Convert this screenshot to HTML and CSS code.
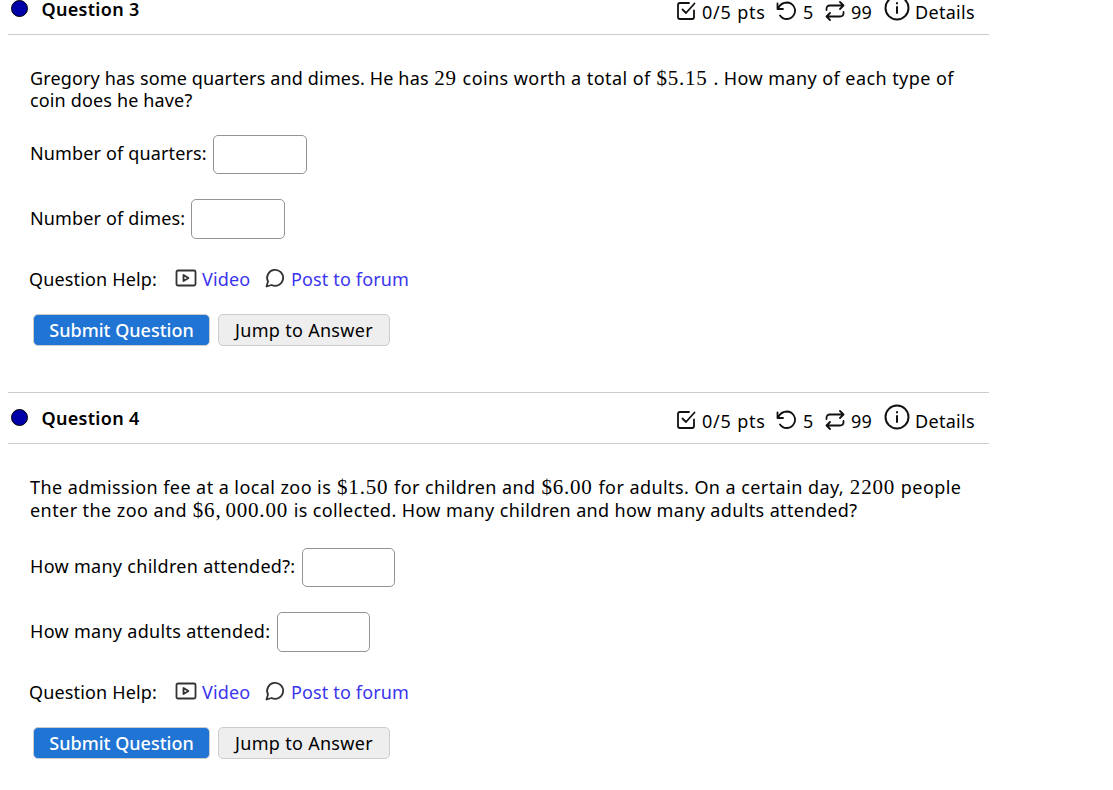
FILE: index.html
```
<!DOCTYPE html>
<html lang="en">
<head>
	<meta charset="UTF-8">
	<title>Questions</title>
	<link rel="stylesheet" href="styles.css">
</head>
<body>
	<svg class="sprite" width="0" height="0">
		<symbol id="check" viewBox="0 0 20 20"><path d="M13 2H4Q2 2 2 4V16Q2 18 4 18H16Q18 18 18 16V9.500M6.500 8.500L10 12L18.500 2.500"/></symbol>
		<symbol id="undo" viewBox="0 0 20 20"><path d="M1.500 2.500V8H7M2 7.500C4 3.500 7 1.500 11 1.500A8.250 8.250 0 1 1 4 14.500"/></symbol>
		<symbol id="repeat" viewBox="0 0 20 20"><path d="M15 1L18.500 4.500L15 8M18.500 4.500H5Q1.500 4.500 1.500 8V9M5 12L1.500 15.500L5 19M1.500 15.500H15Q18.500 15.500 18.500 12V11"/></symbol>
		<symbol id="info" viewBox="0 0 26 26"><circle cx="13" cy="13" r="11.500"/><path d="M13 12V18M13 8V8.500"/></symbol>
		<symbol id="video" viewBox="0 0 22 18"><rect x="1.500" y="1.500" width="19" height="15" rx="1.500"/><path d="M8.500 6V12L13.500 9Z"/></symbol>
		<symbol id="forum" viewBox="0 0 20 20"><path d="M1.500 18.500L3 13.500A8 8 0 1 1 6.500 17Z"/></symbol>
	</svg>
	<div class="wrap">
		<div class="question">
			<div class="head">
				<span class="dot"></span>
				<h2>Question 3</h2>
				<div class="meta">
					<svg class="icon check"><use href="#check"/></svg><span class="pts">0/5 pts</span>
					<svg class="icon undo"><use href="#undo"/></svg><span class="tries">5</span>
					<svg class="icon repeat"><use href="#repeat"/></svg><span class="versions">99</span>
					<svg class="icon info"><use href="#info"/></svg><span class="details">Details</span>
				</div>
			</div>
			<div class="content">
				<p class="text"><span class="tight">Gregory has some quarters and dimes. He has </span><span class="math">29</span> coins worth a total of <span class="math">$5.15</span> . How many of each type of<br><span class="tight">coin does he have?</span></p>
				<div class="row tight"><label for="q3a">Number of quarters:</label><input type="text" id="q3a"></div>
				<div class="row tall tight"><label for="q3b">Number of dimes:</label><input type="text" id="q3b"></div>
				<div class="help tight">
					<span class="help_t">Question Help:</span>
					<svg class="icon video"><use href="#video"/></svg><a href="#" class="video_a">Video</a>
					<svg class="icon forum"><use href="#forum"/></svg><a href="#">Post to forum</a>
				</div>
				<div class="btns">
					<button class="btn primary">Submit Question</button>
					<button class="btn">Jump to Answer</button>
				</div>
			</div>
		</div>
		<div class="question second">
			<div class="head">
				<span class="dot"></span>
				<h2>Question 4</h2>
				<div class="meta">
					<svg class="icon check"><use href="#check"/></svg><span class="pts">0/5 pts</span>
					<svg class="icon undo"><use href="#undo"/></svg><span class="tries">5</span>
					<svg class="icon repeat"><use href="#repeat"/></svg><span class="versions">99</span>
					<svg class="icon info"><use href="#info"/></svg><span class="details">Details</span>
				</div>
			</div>
			<div class="content">
				<p class="text">The admission fee at a local zoo is <span class="math">$1.50</span> for children and <span class="math">$6.00</span> for adults. On a certain day, <span class="math">2200</span> people<br>enter the zoo and <span class="math">$6,<span class="thin"></span>000.00</span><span class="snug"> is collected. How many children and how many adults attended?</span></p>
				<div class="row"><label for="q4a">How many children attended?:</label><input type="text" id="q4a"></div>
				<div class="row tall"><label for="q4b">How many adults attended:</label><input type="text" id="q4b"></div>
				<div class="help tight">
					<span class="help_t">Question Help:</span>
					<svg class="icon video"><use href="#video"/></svg><a href="#" class="video_a">Video</a>
					<svg class="icon forum"><use href="#forum"/></svg><a href="#">Post to forum</a>
				</div>
				<div class="btns">
					<button class="btn primary">Submit Question</button>
					<button class="btn">Jump to Answer</button>
				</div>
			</div>
		</div>
	</div>
</body>
</html>
```
FILE: styles.css
```
html {
    overflow: hidden;
}

body,
p,
h2 {
    margin: 0;
    padding: 0;
}

body {
    background: #fff;
    color: #000;
    font: 18px/22px "Trebuchet MS", "Noto Sans", sans-serif;
    letter-spacing: 0.3px;
}

a {
    color: #3b35ee;
    text-decoration: none;
}

.sprite {
    display: block;
}

.wrap {
    width: 981px;
    margin: -17px 0 0 8px;
}

.head {
    display: flex;
    align-items: center;
    height: 52px;
    box-sizing: border-box;
    border-top: 1px solid #ccc;
    border-bottom: 1px solid #ccc;
}

.dot {
    width: 17px;
    height: 17px;
    margin: 0 14px 2px 2.5px;
    box-sizing: border-box;
    border: 1.5px solid #000;
    border-radius: 50%;
    background: #0000a8;
}

h2 {
    font-size: 18px;
    line-height: 18px;
    font-weight: 600;
}

.meta {
    display: flex;
    align-items: center;
    margin-left: auto;
    padding: 5px 14px 0 0;
}

.icon {
    flex: none;
    fill: none;
    stroke: #111;
    stroke-width: 1.8;
    stroke-linejoin: round;
    stroke-linecap: round;
}

.check,
.undo,
.repeat {
    width: 20px;
    height: 20px;
    margin-bottom: 2px;
}

.pts {
    width: 74px;
    margin-left: 6px;
    letter-spacing: 0.8px;
}

.tries {
    width: 16px;
    margin-left: 7px;
}

.repeat {
    margin-left: 6px;
}

.versions {
    width: 28px;
    margin-left: 6px;
}

.info {
    width: 26px;
    height: 26px;
    margin: 0 5px 7px 5px;
    stroke-width: 2;
}

.details {
    width: 60px;
}

.content {
    height: 357px;
    padding: 32px 0 0 22px;
    box-sizing: border-box;
}

.text {
    height: 68px;
    white-space: nowrap;
    letter-spacing: 0.43px;
}

.second .text {
    height: 72px;
    line-height: 23px;
}

.tight {
    letter-spacing: 0.15px;
}

.snug {
    letter-spacing: 0.37px;
}

.math {
    margin: 0 0.7px;
    font: 21px/20px "Liberation Serif", serif;
    letter-spacing: 0.8px;
}

.thin {
    display: inline-block;
    width: 4px;
}

.row {
    display: flex;
    align-items: center;
    height: 39px;
    margin-bottom: 25px;
}

.row label {
    padding-bottom: 3px;
}

.row input {
    width: 94px;
    height: 100%;
    margin-left: 6px;
    box-sizing: border-box;
    border: 1px solid #949494;
    border-radius: 5px;
}

.row.tall {
    height: 40px;
    margin-bottom: 0;
}

.tall label {
    padding-bottom: 2px;
}

.second .row input {
    width: 93px;
    margin-left: 7px;
}

.help {
    display: flex;
    align-items: center;
    height: 24px;
    margin: 28px 0 0 -1px;
}

.help_t {
    width: 146px;
}

.help .icon {
    stroke: #333;
    margin-bottom: 3px;
}

.video {
    width: 22px;
    height: 18px;
}

.video_a {
    width: 57px;
    margin: 0 6px 0 5px;
}

.forum {
    width: 20px;
    height: 20px;
    margin-right: 6px;
}

.btns {
    display: flex;
    margin: 23px 0 0 3px;
}

.btn {
    width: 172px;
    height: 32px;
    padding: 0;
    border: 1px solid #ccc;
    border-radius: 5px;
    background: #eee;
    color: #000;
    font: inherit;
    letter-spacing: inherit;
}

.primary {
    width: 177px;
    margin-right: 8px;
    background: #1f74d4;
    color: #fff;
    font-weight: 500;
    letter-spacing: 0;
}
```
